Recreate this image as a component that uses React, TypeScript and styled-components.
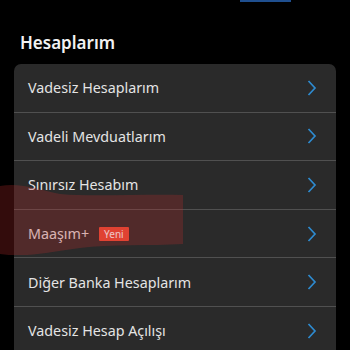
import React from "react";
import styled, { createGlobalStyle } from "styled-components";

const GlobalStyle = createGlobalStyle`
  html, body {
    margin: 0;
    padding: 0;
    background: #000;
  }
  body {
    font-family: "Noto Sans", "Open Sans", sans-serif;
    overflow: hidden;
  }
`;

const rows = [
  { label: "Vadesiz Hesaplarım" },
  { label: "Vadeli Mevduatlarım" },
  { label: "Sınırsız Hesabım" },
  { label: "Maaşım+", badge: "Yeni" },
  { label: "Diğer Banka Hesaplarım" },
  { label: "Vadesiz Hesap Açılışı" },
];

const App = () => {
  return (
    <>
      <GlobalStyle />
      <Screen>
        <TopBar>
          <TabLine />
        </TopBar>
        <Title>Hesaplarım</Title>
        <Card>
          {rows.map((row, i) => (
            <Row key={row.label} last={i === rows.length - 1}>
              <Label>
                {row.label}
                {row.badge && <Badge>{row.badge}</Badge>}
              </Label>
              <Chevron width="12" height="16" viewBox="0 0 12 16">
                <path
                  d="M2.5 1 L9 8 L2.5 15"
                  fill="none"
                  stroke="#2e8bd0"
                  strokeWidth="1.7"
                />
              </Chevron>
            </Row>
          ))}
        </Card>
        {/* red marker smear drawn over the list */}
        <Smear width="190" height="75" viewBox="0 0 190 75">
          <path
            d="M0 6 C20 2 40 10 60 14 C90 17 140 14 183 15 L183 64 C150 66 110 64 80 68 C50 72 25 78 0 74 Z"
            fill="rgba(190, 45, 45, 0.27)"
          />
        </Smear>
      </Screen>
    </>
  );
};

export default App;

const Screen = styled.div`
  position: relative;
  width: 350px;
  height: 350px;
  background: #000;
  overflow: hidden;
`;

const TopBar = styled.div`
  height: 2px;
  display: flex;
  justify-content: flex-end;
  padding-right: 59px;
`;

const TabLine = styled.div`
  width: 51px;
  height: 2px;
  background: #1f4f8f;
`;

const Title = styled.h1`
  margin: 0;
  padding: 30px 0 0 20px;
  height: 32px;
  font-size: 17px;
  font-weight: 600;
  color: #f2f2f2;
  line-height: 22px;
`;

const Card = styled.div`
  margin: 0 14px;
  background: #2a2a2a;
  border-radius: 7px 7px 0 0;
`;

const Row = styled.div<{ last?: boolean }>`
  height: 47.6px;
  display: flex;
  align-items: center;
  justify-content: space-between;
  padding: 0 18px 0 14px;
  border-bottom: ${(p) => (p.last ? "none" : "1px solid #505050")};
`;

const Label = styled.div`
  display: flex;
  align-items: center;
  gap: 10px;
  font-size: 14.3px;
  color: #e4e4e4;
`;

const Badge = styled.span`
  background: #ee4a35;
  color: #fff;
  font-size: 10px;
  line-height: 14px;
  padding: 0 5px;
  border-radius: 1px;
`;

const Chevron = styled.svg`
  flex-shrink: 0;
`;

const Smear = styled.svg`
  position: absolute;
  left: 0;
  top: 180px;
  pointer-events: none;
`;
